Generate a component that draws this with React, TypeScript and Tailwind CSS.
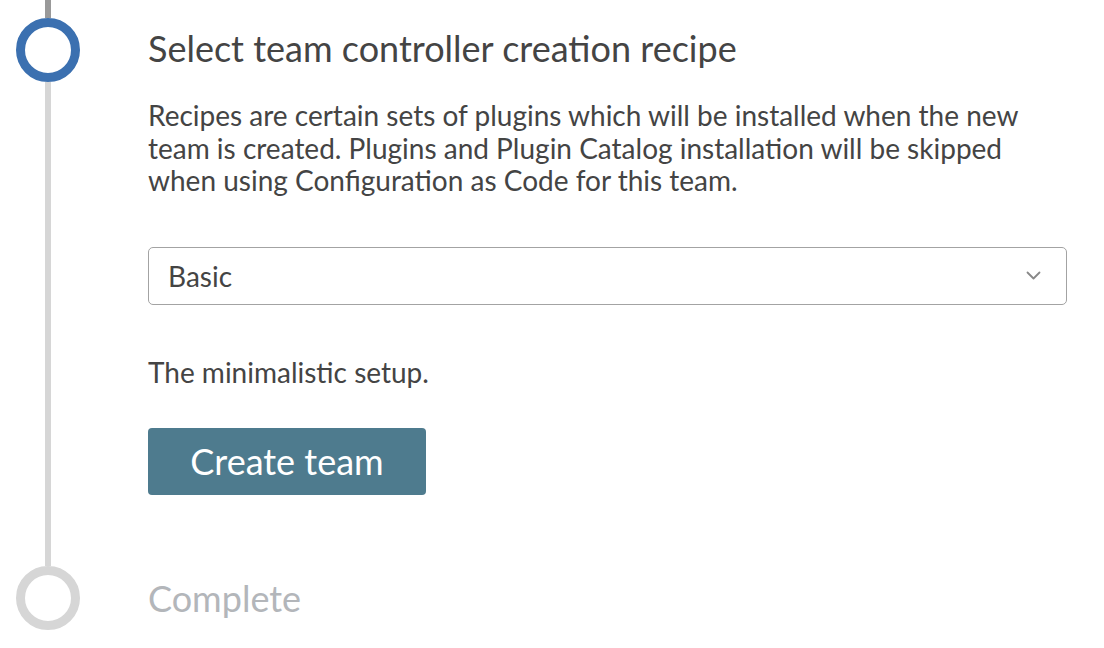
export default function App() {
  return (
    <div className="min-h-screen w-full bg-white font-['Lato',sans-serif] text-[#444]">
      {/* Step 1 */}
      <div className="flex">
        <div className="flex w-[96px] shrink-0 flex-col items-center">
          <div className="h-[18px] w-[6px] bg-[#999]" />
          <div className="h-[64px] w-[64px] rounded-full border-[9px] border-[#3b70b0]" />
          <div className="w-[6px] flex-1 bg-[#d6d6d6]" />
        </div>
        <div className="ml-[52px] w-[919px] pt-[27px] pb-[35px]">
          <h2 className="text-[36px] leading-[42px] text-[#444]">Select team controller creation recipe</h2>
          <p className="mt-[30px] text-[28px] leading-[32.5px] text-[#444]">
            Recipes are certain sets of plugins which will be installed when the new team is created. Plugins and Plugin
            Catalog installation will be skipped when using Configuration as Code for this team.
          </p>
          <div className="relative mt-[50px] flex h-[58px] items-center rounded-[5px] border-[1.5px] border-[#a3a3a3] pl-[19px] pr-[25px]">
            <span className="flex-1 text-[28px] text-[#444]">Basic</span>
            <svg width="15" height="9" viewBox="0 0 15 9" fill="none">
              <polyline points="1.5,1.5 7.5,7.5 13.5,1.5" stroke="#888" strokeWidth="1.8" strokeLinecap="round" strokeLinejoin="round" />
            </svg>
          </div>
          <p className="mt-[51px] text-[28px] leading-[32px] text-[#444]">The minimalistic setup.</p>
          <button
            type="button"
            className="mt-[40px] flex h-[67px] w-[278px] items-center justify-center rounded-[4px] bg-[#4e7b8e] text-[36px] text-white"
          >
            Create team
          </button>
        </div>
      </div>

      {/* Step 2 */}
      <div className="flex">
        <div className="flex w-[96px] shrink-0 flex-col items-center">
          <div className="h-[36px] w-[6px] bg-[#d6d6d6]" />
          <div className="h-[64px] w-[64px] rounded-full border-[9px] border-[#d6d6d6]" />
        </div>
        <div className="ml-[52px] pt-[47px]">
          <div className="text-[36px] leading-[42px] text-[#b3b6ba]">Complete</div>
        </div>
      </div>
    </div>
  )
}
